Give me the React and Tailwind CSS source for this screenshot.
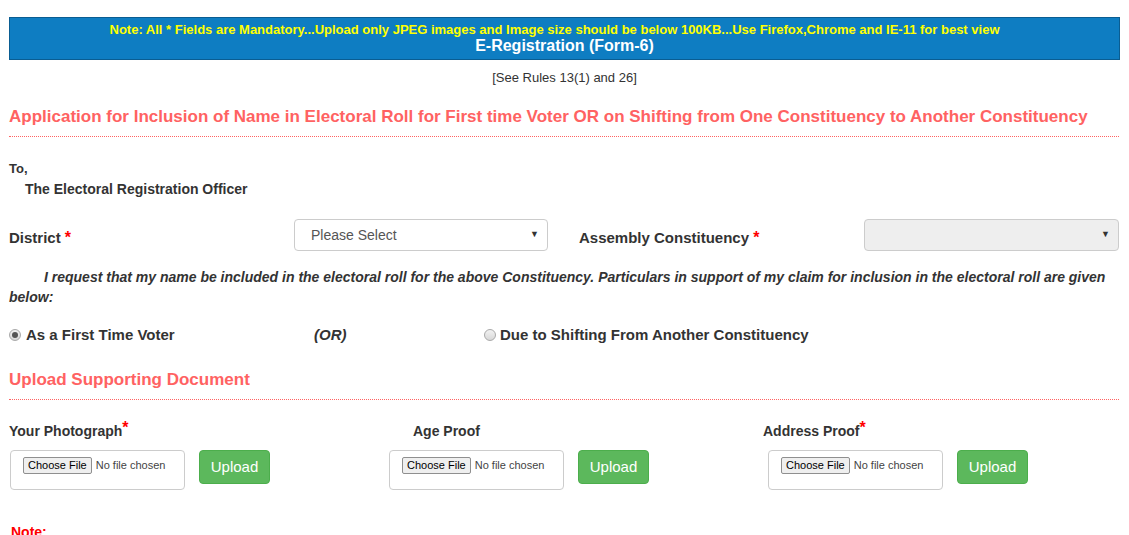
import React from "react";

const font = { fontFamily: '"Liberation Sans", Arial, sans-serif' };

function Radio({ checked }) {
  return (
    <span className="inline-flex items-center justify-center w-[12px] h-[12px] rounded-full border border-[#a9a9a9] bg-gradient-to-b from-[#f2f2f2] to-[#d8d8d8]">
      {checked && <span className="w-[6px] h-[6px] rounded-full bg-[#555]" />}
    </span>
  );
}

function FileBox() {
  return (
    <div className="w-[175px] h-[40px] border border-[#ccc] rounded-[4px] flex items-start pt-[6px] pl-[12px]">
      <span className="h-[17px] px-[4px] border border-[#8f8f8f] rounded-[2px] bg-[#efefef] text-[11px] leading-[15px] text-black">Choose File</span>
      <span className="ml-[4px] text-[11px] leading-[17px] text-[#444]">No file chosen</span>
    </div>
  );
}

function UploadBtn() {
  return (
    <button className="ml-[14px] w-[71px] h-[34px] rounded-[4px] bg-[#5cb85c] border border-[#4cae4c] text-white text-[15px]">Upload</button>
  );
}

function Col({ label, star, labelOffset }) {
  return (
    <div className="w-[379px] shrink-0 flex flex-col">
      <div className={`h-[20px] text-[14px] font-bold text-[#333] leading-[20px] ${labelOffset}`}>
        {label}
        {star && <span className="text-[#ff0000] text-[16px] align-top leading-[14px]">*</span>}
      </div>
      <div className="mt-[9px] flex items-start">
        <FileBox />
        <UploadBtn />
      </div>
    </div>
  );
}

export default function App() {
  return (
    <div className="bg-white w-[1129px] h-[535px] overflow-hidden text-[#333]" style={font}>
      <div className="px-[9px] pt-[17px]">
        <div className="h-[43px] w-[1111px] bg-[#0e7dc2] border border-[#0a5d92] flex flex-col items-center pt-[4px]">
          <div className="mr-[20px] text-[13px] font-bold text-[#ffff00] leading-[15px]">
            Note: All * Fields are Mandatory...Upload only JPEG images and Image size should be below 100KB...Use Firefox,Chrome and IE-11 for best view
          </div>
          <div className="text-[16px] font-bold text-white leading-[18px]">E-Registration (Form-6)</div>
        </div>
        <div className="mt-[10px] text-center text-[13px] leading-[15px] text-[#333]">[See Rules 13(1) and 26]</div>
        <div className="mt-[22px] text-[17px] font-bold text-[#ff6262] leading-[20px]">
          Application for Inclusion of Name in Electoral Roll for First time Voter OR on Shifting from One Constituency to Another Constituency
        </div>
        <div className="mt-[9px] w-[1110px] border-t border-dotted border-[#ff6262]" />
        <div className="mt-[24px] text-[13px] font-bold leading-[16px]">To,</div>
        <div className="mt-[4px] pl-[16px] text-[14px] font-bold leading-[16px] text-[#333]">The Electoral Registration Officer</div>
        <div className="mt-[22px] flex items-center h-[32px]">
          <div className="w-[285px] text-[15px] font-bold pt-[6px]">
            District <span className="text-[#ff0000] text-[16px]">*</span>
          </div>
          <div className="w-[254px] h-[32px] border border-[#ccc] rounded-[4px] flex items-center justify-between pl-[16px] pr-[8px] text-[14px] text-[#555]">
            <span>Please Select</span>
            <span className="text-[9px] text-[#333]">▼</span>
          </div>
          <div className="ml-[31px] w-[285px] text-[15px] font-bold pt-[6px]">
            Assembly Constituency <span className="text-[#ff0000] text-[16px]">*</span>
          </div>
          <div className="w-[255px] h-[32px] border border-[#ccc] rounded-[4px] bg-[#eee] flex items-center justify-end pr-[8px]">
            <span className="text-[9px] text-[#333]">▼</span>
          </div>
        </div>
        <p className="mt-[16px] text-[14px] font-bold italic leading-[20px] text-[#333] indent-[35px] w-[1105px]">
          I request that my name be included in the electoral roll for the above Constituency. Particulars in support of my claim for inclusion in the electoral roll are given below:
        </p>
        <div className="mt-[18px] flex items-center h-[20px] text-[15px] font-bold">
          <Radio checked />
          <span className="ml-[5px] w-[288px]">As a First Time Voter</span>
          <span className="italic w-[170px]">(OR)</span>
          <Radio />
          <span className="ml-[4px]">Due to Shifting From Another Constituency</span>
        </div>
        <div className="mt-[25px] text-[17px] font-bold text-[#ff6262] leading-[20px]">Upload Supporting Document</div>
        <div className="mt-[9px] w-[1110px] border-t border-dotted border-[#ff6262]" />
      </div>
      <div className="mt-[21px] pl-[10px] flex">
        <Col label="Your Photograph" star labelOffset="ml-[-1px]" />
        <Col label="Age Proof" labelOffset="ml-[24px]" />
        <Col label="Address Proof" star labelOffset="ml-[-5px]" />
      </div>
      <div className="mt-[34px] pl-[11px] text-[14px] font-bold text-[#ff0000] leading-[16px]">Note:</div>
    </div>
  );
}
